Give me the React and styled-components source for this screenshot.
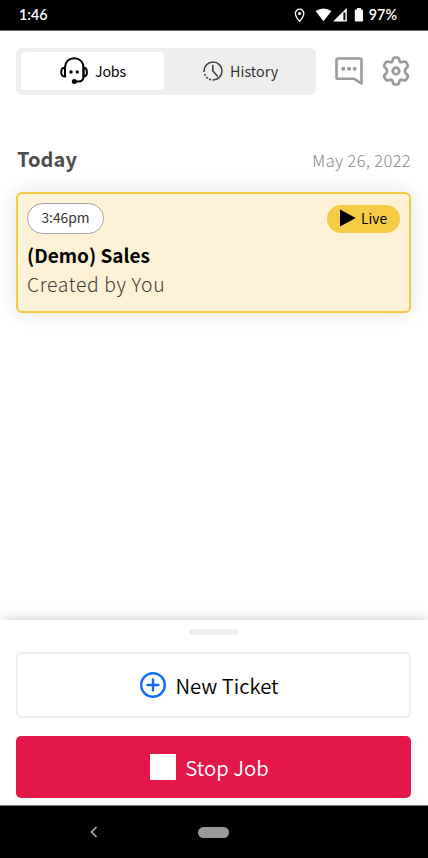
import React from "react";
import styled, { createGlobalStyle } from "styled-components";

const Global = createGlobalStyle`
  * { box-sizing: border-box; }
  html, body { margin: 0; background: #fff; }
  body { font-family: "Noto Sans CJK SC", "Noto Sans", sans-serif; }
  svg { display: block; flex: none; }
  button { font-family: inherit; margin: 0; }
`;

const Screen = styled.div`
  width: 428px;
  height: 858px;
  display: flex;
  flex-direction: column;
  background: #fff;
  overflow: hidden;
`;

const StatusBar = styled.header`
  flex: none;
  height: 31px;
  padding: 0 31px 0 19px;
  background: #000;
  border-bottom: 1px solid #666;
  display: flex;
  justify-content: space-between;
  align-items: center;
  color: #fff;
`;

const StatusIcons = styled.div`
  display: flex;
  align-items: center;
`;

const Label = styled.span`
  font-family: ${(p) => p.$family || "inherit"};
  font-size: ${(p) => p.$size}px;
  font-weight: ${(p) => p.$weight || 400};
  line-height: ${(p) => p.$line || 24}px;
  letter-spacing: ${(p) => p.$spacing || 0}px;
  color: ${(p) => p.$color || "#000"};
  white-space: nowrap;
`;

const Toolbar = styled.nav`
  flex: none;
  display: flex;
  align-items: center;
  padding: 17px 17px 0 16px;
`;

const Tabs = styled.div`
  width: 300px;
  height: 47px;
  padding: 4px 4px 4px 5px;
  display: flex;
  background: #eee;
  border-radius: 6px;
`;

const Tab = styled.button`
  flex: ${(p) => (p.$active ? "0 0 143px" : "1")};
  height: 38px;
  padding: 0 0 0 39px;
  display: flex;
  align-items: center;
  border: 0;
  border-radius: 4px;
  background: ${(p) => (p.$active ? "#fff" : "transparent")};
  gap: 7px;
`;

const ToolIcons = styled.div`
  flex: 1;
  display: flex;
  justify-content: space-between;
  align-items: center;
  padding: 0 0 1px 19px;
`;

const Main = styled.main`
  flex: 1;
  padding: 51px 17px 0 16px;
`;

const DayRow = styled.div`
  height: 26px;
  padding-left: 1px;
  display: flex;
  justify-content: space-between;
  align-items: center;
`;

const DateText = styled.div`
  height: 24px;
  padding-top: 1px;
`;

const JobCard = styled.article`
  margin-top: 20px;
  height: 121px;
  padding: 9px 9px 0 9px;
  border: 2px solid #f4c947;
  border-radius: 6px;
  background: #fdf2d6;
  box-shadow: 0 0 20px rgba(0, 0, 0, 0.12);
  display: flex;
  flex-direction: column;
`;

const CardTop = styled.div`
  display: flex;
  justify-content: space-between;
  align-items: center;
  height: 31px;
  margin-bottom: 6px;
`;

const TimePill = styled.div`
  width: 77px;
  height: 31px;
  padding-bottom: 3px;
  border: 1px solid #a5a5a5;
  border-radius: 16px;
  background: #fff;
  display: flex;
  align-items: center;
  justify-content: center;
`;

const LivePill = styled.div`
  width: 73px;
  height: 28px;
  padding: 0 0 1px 13px;
  border-radius: 14px;
  background: #f6cb45;
  display: flex;
  align-items: center;
  gap: 5px;
`;

const CardText = styled.div`
  height: 30px;
`;

const Sheet = styled.section`
  flex: none;
  height: 185px;
  padding: 9px 17px 0 16px;
  background: #fff;
  box-shadow: 0 0 14px rgba(0, 0, 0, 0.2);
  display: flex;
  flex-direction: column;
`;

const Handle = styled.div`
  flex: none;
  width: 49px;
  height: 6px;
  margin: 0 auto 17px;
  border-radius: 3px;
  background: #eee;
`;

const ActionButton = styled.button`
  flex: none;
  height: ${(p) => (p.$danger ? 62 : 66)}px;
  margin-bottom: ${(p) => (p.$danger ? 0 : 18)}px;
  padding: 0 8px 0 0;
  border: ${(p) => (p.$danger ? "0" : "2px solid #eee")};
  border-radius: 5px;
  background: ${(p) => (p.$danger ? "#e4174b" : "#fff")};
  display: flex;
  align-items: center;
  justify-content: center;
  gap: 9px;
`;

const StopSquare = styled.i`
  width: 26px;
  height: 26px;
  background: #fff;
`;

const NavBar = styled.footer`
  flex: none;
  height: 53px;
  background: #000;
  border-top: 1px solid #777;
  display: grid;
  grid-template-columns: 89px 109px 31px;
  align-items: center;
`;

const HomePill = styled.div`
  grid-column: 3;
  height: 11px;
  border-radius: 6px;
  background: #999;
`;

const Headset = () => (
  <svg width="28" height="28" viewBox="0 0 28 28" fill="none" stroke="#000" strokeWidth="2" strokeLinecap="round">
    <path d="M5 10.500C5 5 8.800 1.300 14.300 1.300S23.500 5 23.500 10.500V19.500c0 3.500-2 5-5 5h-3" />
    <path d="M5 10.800v8.800C2.500 19.600 1.200 18 1.200 15.200S2.500 10.800 5 10.800zM23.500 10.800v8.800c2.400 0 3.400-1.500 3.400-4.400s-1-4.400-3.400-4.400z" />
    <g fill="#000" stroke="none">
      <circle cx="11" cy="15" r="1.700" />
      <circle cx="17.300" cy="15" r="1.700" />
      <circle cx="14.300" cy="24.500" r="2.500" />
    </g>
  </svg>
);

const HistoryIcon = () => (
  <svg width="20" height="20" viewBox="0 0 20 20" fill="none" stroke="#444" strokeWidth="1.600">
    <path d="M1 11C.6 5 5 1 10 1a9 9 0 1 1 0 18" />
    <path d="M1.600 13A9 9 0 0 0 10 19" strokeDasharray="2 1.400" />
    <path d="M9.800 4.500V10l4.500 5" strokeLinecap="round" />
  </svg>
);

const ChatIcon = () => (
  <svg width="28" height="28" viewBox="0 0 28 28" fill="none" stroke="#9b9b9b" strokeWidth="2.600" strokeLinejoin="round">
    <path d="M2.800 1.500h22.400q1.300 0 1.300 1.300v23.700l-7.300-4.700H2.800q-1.300 0-1.300-1.300V2.800q0-1.300 1.300-1.300z" />
    <g fill="#9b9b9b" stroke="none">
      <circle cx="8.300" cy="11.700" r="2" />
      <circle cx="14" cy="11.700" r="2" />
      <circle cx="19.700" cy="11.700" r="2" />
    </g>
  </svg>
);

const GearIcon = () => (
  <svg width="30" height="30" viewBox="0 0 30 30" fill="none" stroke="#9b9b9b" strokeWidth="2.700" strokeLinejoin="round">
    <path d="M12.200 2.600Q12.500 1.500 13.600 1.500h2.800q1.100 0 1.400 1.100l.8 2.600q.3 1 1.300 1.100l3.500-.7q1.200-.2 1.800.8l1.500 2.600q.6 1-.2 1.900l-2.200 2.500q-.7 1.600 0 3.200l2.200 2.500q.8.900.2 1.900l-1.500 2.600q-.6 1-1.800.8l-3.500-.7q-1 .1-1.300 1.100l-.8 2.600q-.3 1.100-1.400 1.100h-2.800q-1.100 0-1.400-1.100l-.8-2.600q-.3-1-1.300-1.100l-3.500.7q-1.200.2-1.800-.8L3.300 21q-.6-1 .2-1.900l2.200-2.500q.7-1.600 0-3.200l-2.200-2.500q-.8-.9-.2-1.900l1.500-2.600q.6-1 1.800-.8l3.500.7q1-.1 1.300-1.100z" />
    <circle cx="15" cy="15" r="3.300" />
  </svg>
);

const StatusGlyphs = () => (
  <svg width="76" height="18" viewBox="0 0 76 18" fill="#fff">
    <path d="M6.600 3.200a4.200 4.200 0 0 1 4.200 4.300c0 3-4.200 7.900-4.200 7.900s-4.200-4.900-4.200-7.900a4.200 4.200 0 0 1 4.200-4.300z" fill="none" stroke="#fff" strokeWidth="1.300" />
    <circle cx="6.600" cy="7.500" r="1.600" />
    <path d="M22.500 5q8-5 16 0l-8 10.200z" />
    <path d="M53.800 2v13.500H40z" />
    <path d="M50.400 6.500h2v7.700h-2z" fill="#000" />
    <path d="M64 2h4v1.500h1.100q.9 0 .9.900v10.200q0 .900-.900.900h-6.400q-.9 0-.9-.9V4.400q0-.9.900-.9H64z" />
  </svg>
);

const PlusIcon = () => (
  <svg width="26" height="26" viewBox="0 0 26 26" fill="none" stroke="#0d6efd" strokeWidth="2.400" strokeLinecap="round">
    <circle cx="13" cy="13" r="11.800" />
    <path d="M13 7.500v11M7.500 13h11" />
  </svg>
);

const PlayIcon = () => (
  <svg width="16" height="18" viewBox="0 0 16 18">
    <path d="M0 .5v17L15.800 9z" />
  </svg>
);

const BackIcon = () => (
  <svg width="10" height="12" viewBox="0 0 10 12" fill="none" stroke="#aaa" strokeWidth="1.700">
    <path d="M7.500 1L2.500 6l5 5" />
  </svg>
);

export default function App() {
  return (
    <>
      <Global />
      <Screen>
        <StatusBar>
          <Label $family='"Lato", sans-serif' $size={14.300} $weight={600} $color="#fff">1:46</Label>
          <StatusIcons>
            <StatusGlyphs />
            <Label $family='"Lato", sans-serif' $size={14.300} $weight={600} $color="#fff">97%</Label>
          </StatusIcons>
        </StatusBar>
        <Toolbar>
          <Tabs>
            <Tab $active>
              <Headset />
              <Label $size={14.3} $weight={400} $spacing={-0.25}>Jobs</Label>
            </Tab>
            <Tab>
              <HistoryIcon />
              <Label $size={14.3} $weight={400} $spacing={0.05} $color="#333">History</Label>
            </Tab>
          </Tabs>
          <ToolIcons>
            <ChatIcon />
            <GearIcon />
          </ToolIcons>
        </Toolbar>
        <Main>
          <DayRow>
            <Label $size={20} $weight={700} $spacing={0.1} $color="#4d4d4d">Today</Label>
            <DateText>
              <Label $size={16.5} $weight={300} $spacing={0.35} $color="#888">May 26, 2022</Label>
            </DateText>
          </DayRow>
          <JobCard>
            <CardTop>
              <TimePill>
                <Label $size={13.8} $weight={400} $color="#333">3:46pm</Label>
              </TimePill>
              <LivePill>
                <PlayIcon />
                <Label $size={13.8} $weight={400}>Live</Label>
              </LivePill>
            </CardTop>
            <CardText>
              <Label $size={19} $weight={700} $line={29}>(Demo) Sales</Label>
            </CardText>
            <CardText>
              <Label $size={19.3} $weight={300} $spacing={0.65} $line={29} $color="#3d3a36">Created by You</Label>
            </CardText>
          </JobCard>
        </Main>
        <Sheet>
          <Handle />
          <ActionButton>
            <PlusIcon />
            <Label $size={20.300} $weight={350}>New Ticket</Label>
          </ActionButton>
          <ActionButton $danger>
            <StopSquare />
            <Label $size={20.300} $weight={350} $color="#fff">Stop Job</Label>
          </ActionButton>
        </Sheet>
        <NavBar>
          <span />
          <BackIcon />
          <HomePill />
        </NavBar>
      </Screen>
    </>
  );
}
